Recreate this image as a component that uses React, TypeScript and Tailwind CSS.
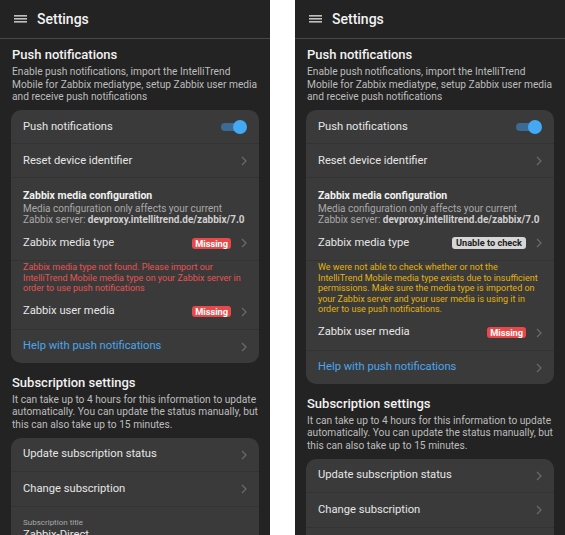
import React from "react";

function Chevron() {
  return (
    <svg width="6" height="10" viewBox="0 0 6 10" className="shrink-0">
      <polyline points="1,1 5,5 1,9" fill="none" stroke="#6a6a6a" strokeWidth="1.2" />
    </svg>
  );
}

function Hamburger() {
  return (
    <svg width="13" height="8" viewBox="0 0 13 8">
      <rect x="0" y="0.2" width="13" height="1.3" fill="#e6e6e6" />
      <rect x="0" y="3.2" width="13" height="1.3" fill="#e6e6e6" />
      <rect x="0" y="6.2" width="13" height="1.3" fill="#e6e6e6" />
    </svg>
  );
}

function Toggle() {
  return (
    <div className="relative w-[26px] h-[14px] flex items-center">
      <div className="w-[20px] h-[8px] rounded-full bg-[#3b6b94]" />
      <div className="absolute right-0 top-0 w-[14px] h-[14px] rounded-full bg-[#45a8f5]" />
    </div>
  );
}

function Row({
  label,
  right,
  chevron = true,
  h = "h-[33px]",
  labelClass = "text-[#e6e6e6]",
}: {
  label: string;
  right?: React.ReactNode;
  chevron?: boolean;
  h?: string;
  labelClass?: string;
}) {
  return (
    <div className={h + " flex items-center pt-px pl-[12px] pr-[12px]"}>
      <span className={"flex-1 text-[11.2px] " + labelClass}>{label}</span>
      {right}
      {chevron && <div className="ml-[10px]"><Chevron /></div>}
    </div>
  );
}

function Divider() {
  return <div className="h-px bg-[#333333]" />;
}

function Missing() {
  return (
    <span className="h-[11px] px-[3px] rounded-[3px] bg-[#e84848] text-white text-[9.2px] font-bold leading-[11px]">
      Missing
    </span>
  );
}

function Unable() {
  return (
    <span className="h-[12px] px-[4px] rounded-[3px] bg-[#d6d6d6] text-[#1e1e1e] text-[9.2px] font-bold leading-[12px]">
      Unable to check
    </span>
  );
}

function Lines({ lines }: { lines: string[] }) {
  return (
    <>
      {lines.map((l, i) => (
        <span key={i} className="block whitespace-nowrap">
          {l}
        </span>
      ))}
    </>
  );
}

function Phone({ variant }: { variant: "missing" | "unable" }) {
  return (
    <div className="w-[270px] h-[535px] overflow-hidden bg-[#232323] shrink-0">
      <header className="h-[39px] border-b border-[#484848] flex items-center pl-[14px]">
        <Hamburger />
        <span className="ml-[10px] text-[14px] font-medium text-[#f2f2f2]">Settings</span>
      </header>
      <div className="px-[11px]">
        <h2 className="mt-[8px] ml-px text-[13px] font-medium leading-[16px] text-[#f2f2f2]">
          Push notifications
        </h2>
        <p className="mt-[3px] ml-px text-[10.2px] leading-[12.5px] text-[#bdbdbd]">
          <Lines
            lines={[
              "Enable push notifications, import the IntelliTrend",
              "Mobile for Zabbix mediatype, setup Zabbix user media",
              "and receive push notifications",
            ]}
          />
        </p>
        <div className="mt-[6.5px] rounded-[10px] bg-[#3a3a3a] overflow-hidden">
          <Row label="Push notifications" right={<Toggle />} chevron={false} />
          <Divider />
          <Row label="Reset device identifier" />
          <Divider />
          <div className="pt-[11px] pl-[12px] pr-[8px]">
            <div className="text-[10.5px] leading-[13px] font-bold text-[#f0f0f0]">Zabbix media configuration</div>
            <div className="mt-px text-[10px] leading-[11px] text-[#a9a9a9]">
              <span className="block whitespace-nowrap">Media configuration only affects your current</span>
              <span className="block whitespace-nowrap">
                Zabbix server: <span className="font-bold text-[#cfcfcf]">devproxy.intellitrend.de/zabbix/7.0</span>
              </span>
            </div>
          </div>
          <Row h="h-[35px]" label="Zabbix media type" right={variant === "missing" ? <Missing /> : <Unable />} />
          <Divider />
          {variant === "missing" ? (
            <p className="pt-px pl-[12px] text-[9px] leading-[10.5px] text-[#e55454]">
              <Lines
                lines={[
                  "Zabbix media type not found. Please import our",
                  "IntelliTrend Mobile media type on your Zabbix server in",
                  "order to use push notifications",
                ]}
              />
            </p>
          ) : (
            <p className="pt-px pl-[12px] text-[9px] leading-[10.5px] text-[#e2b30c]">
              <Lines
                lines={[
                  "We were not able to check whether or not the",
                  "IntelliTrend Mobile media type exists due to insufficient",
                  "permissions. Make sure the media type is imported on",
                  "your Zabbix server and your user media is using it in",
                  "order to use push notifications.",
                ]}
              />
            </p>
          )}
          <Row h="h-[35px]" label="Zabbix user media" right={<Missing />} />
          <Divider />
          <Row label="Help with push notifications" labelClass="text-[#4aa6ec]" />
        </div>
        <h2 className="mt-[12px] ml-px text-[13px] font-medium leading-[16px] text-[#f2f2f2]">
          Subscription settings
        </h2>
        <p className="mt-[3px] ml-px text-[10.2px] leading-[12.5px] text-[#bdbdbd]">
          <Lines
            lines={[
              "It can take up to 4 hours for this information to update",
              "automatically. You can update the status manually, but",
              "this can also take up to 15 minutes.",
            ]}
          />
        </p>
        <div className="mt-[6.5px] rounded-[10px] bg-[#3a3a3a] overflow-hidden">
          <Row label="Update subscription status" />
          <Divider />
          <Row h="h-[34px]" label="Change subscription" />
          <Divider />
          <div className="pt-[11px] pl-[12px] pb-[8px]">
            <div className="text-[8px] leading-[10px] text-[#a9a9a9]">Subscription title</div>
            <div className="text-[11.2px] leading-[14px] text-[#e6e6e6]">Zabbix-Direct</div>
          </div>
        </div>
      </div>
    </div>
  );
}

export default function App() {
  return (
    <div
      className="w-[565px] h-[535px] bg-white flex gap-[25px] overflow-hidden"
      style={{ fontFamily: "Roboto, 'Noto Sans', sans-serif" }}
    >
      <Phone variant="missing" />
      <Phone variant="unable" />
    </div>
  );
}
